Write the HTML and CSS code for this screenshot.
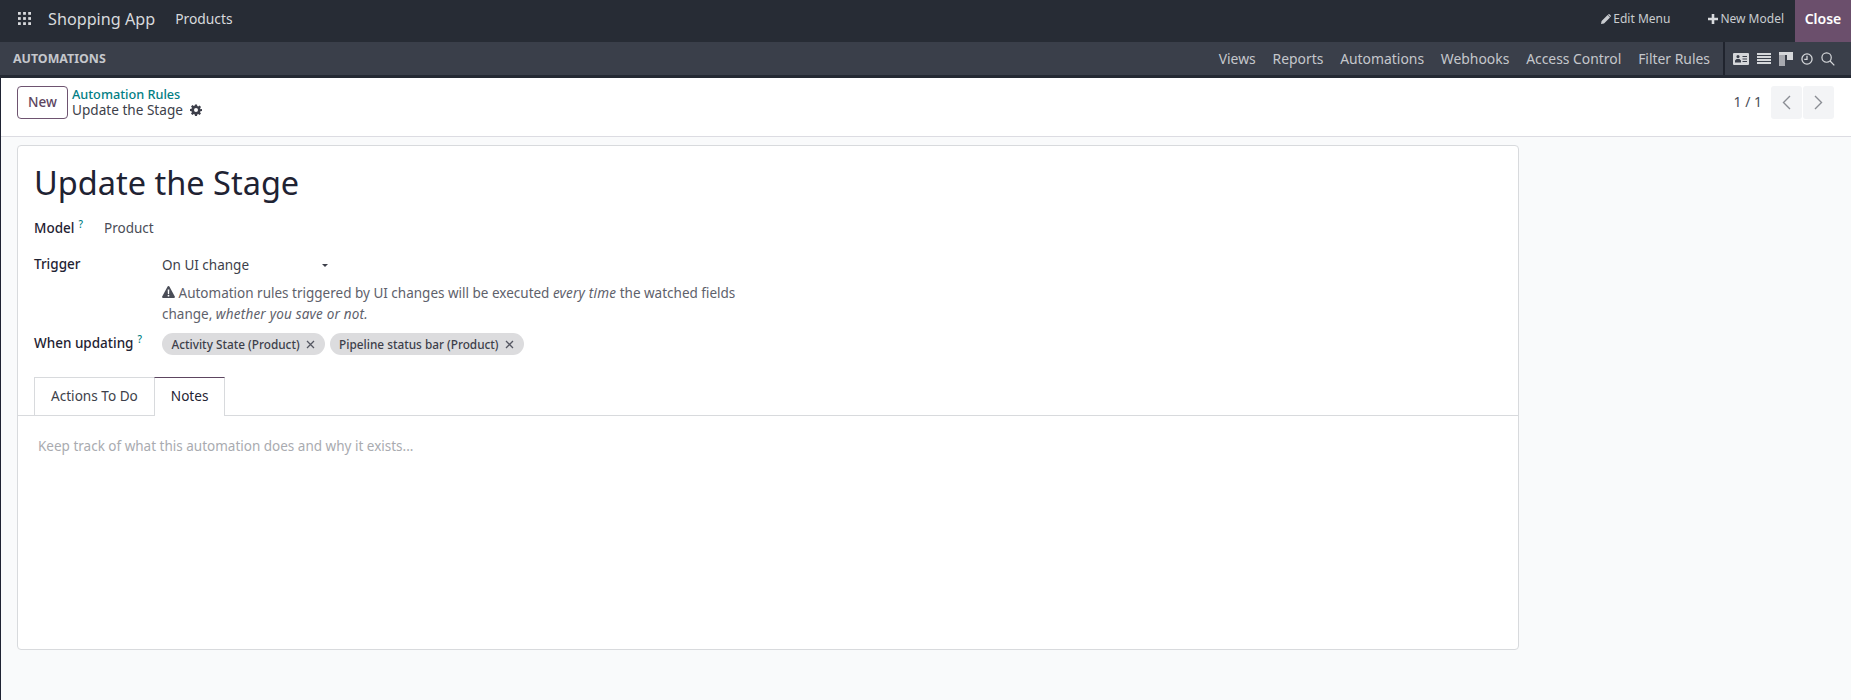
FILE: index.html
```html
<!DOCTYPE html>
<html lang="en">
<head>
<meta charset="utf-8">
<title>Update the Stage</title>
<link rel="stylesheet" href="styles.css">
</head>
<body>
<header class="navbar">
  <button class="apps" aria-label="Apps">
    <svg width="13" height="13" viewBox="0 0 14 14" fill="#d8dadd"><rect x="0" y="0" width="3" height="3"/><rect x="5.500" y="0" width="3" height="3"/><rect x="11" y="0" width="3" height="3"/><rect x="0" y="5.500" width="3" height="3"/><rect x="5.500" y="5.500" width="3" height="3"/><rect x="11" y="5.500" width="3" height="3"/><rect x="0" y="11" width="3" height="3"/><rect x="5.500" y="11" width="3" height="3"/><rect x="11" y="11" width="3" height="3"/></svg>
  </button>
  <span class="brand">Shopping App</span>
  <span class="menu-item">Products</span>
  <span class="spacer"></span>
  <span class="studio-link edit"><svg width="10" height="10" viewBox="0 0 10 10" fill="#c9ccd0"><path d="M0 10l.6-3L6.600 1l2.400 2.400-6 6zM7.300.4a1 1 0 0 1 1.400 0l1 1a1 1 0 0 1 0 1.300l-.4.4L6.900.8z"/></svg>Edit Menu</span>
  <span class="studio-link model"><svg width="10" height="10" viewBox="0 0 10 10" fill="#d8dadd"><path d="M3.700 0h2.600v3.700H10v2.600H6.300V10H3.700V6.300H0V3.700h3.700z"/></svg>New Model</span>
  <span class="close">Close</span>
</header>
<nav class="subbar">
  <span class="sub-title">AUTOMATIONS</span>
  <span class="spacer"></span>
  <span class="sub-item">Views</span>
  <span class="sub-item">Reports</span>
  <span class="sub-item">Automations</span>
  <span class="sub-item">Webhooks</span>
  <span class="sub-item">Access Control</span>
  <span class="sub-item">Filter Rules</span>
  <span class="view-icons">
    <svg width="16" height="12" viewBox="0 0 16 12" fill="#d5d7da"><path fill-rule="evenodd" d="M1 0h14a1 1 0 0 1 1 1v10a1 1 0 0 1-1 1H1a1 1 0 0 1-1-1V1a1 1 0 0 1 1-1zm4 2a1.600 1.600 0 1 0 0 3.200A1.600 1.600 0 0 0 5 2zM2 9.500h6V7.500L6.500 6h-3L2 7.500zM9.500 3v1H14V3zm0 2.500v1H14v-1zm0 2.500v1H14V8z"/></svg>
    <svg width="14" height="11" viewBox="0 0 14 11" fill="#d5d7da"><rect width="14" height="2"/><rect y="3" width="14" height="2"/><rect y="6" width="14" height="2"/><rect y="9" width="14" height="2"/></svg>
    <svg width="14" height="14" viewBox="0 0 14 14" fill="#d5d7da"><rect width="14" height="3"/><rect y="3" width="6" height="11" opacity=".7"/><rect x="8" y="3" width="6" height="5"/></svg>
    <svg width="12" height="12" viewBox="0 0 13 13" fill="none" stroke="#d5d7da" stroke-width="1.400"><circle cx="6.500" cy="6.500" r="5.500"/><path d="M6.500 3v4H3.500"/></svg>
    <svg width="14" height="14" viewBox="0 0 15 15" fill="none" stroke="#d5d7da" stroke-width="1.300"><circle cx="6" cy="6" r="5"/><path d="M9.700 9.700L14.300 14.300"/></svg>
  </span>
</nav>
<div class="page">
  <section class="control">
    <button class="btn-new">New</button>
    <div class="crumbs">
      <a class="crumb-link">Automation Rules</a>
      <span class="crumb-current">Update the Stage
        <svg class="gear" width="12" height="12" viewBox="0 0 24 24" fill="#3d3f4a"><path fill-rule="evenodd" d="M10 1h4l.6 3.100 1.900.8 2.700-1.800 2.800 2.800-1.800 2.700.8 1.900L24 10v4l-3.100.6-.8 1.900 1.800 2.700-2.800 2.800-2.700-1.800-1.900.8L14 23.900h-4l-.6-3.100-1.900-.8-2.700 1.800L2 19l1.800-2.700-.8-1.900L0 14v-4l3.100-.6.800-1.900L2.100 4.900l2.800-2.800 2.700 1.800 1.900-.8zM12 8a4 4 0 1 0 0 8 4 4 0 0 0 0-8z"/></svg>
      </span>
    </div>
    <span class="spacer"></span>
    <span class="pager">1 / 1</span>
    <span class="pager-btns">
      <button class="pager-btn" aria-label="Previous"><svg width="9" height="15" viewBox="0 0 9 15" fill="none" stroke="#8a8d94" stroke-width="1.400"><path d="M8 1L1.500 7.500 8 14"/></svg></button>
      <button class="pager-btn" aria-label="Next"><svg width="9" height="15" viewBox="0 0 9 15" fill="none" stroke="#8a8d94" stroke-width="1.400"><path d="M1 1l6.500 6.500L1 14"/></svg></button>
    </span>
  </section>
  <main class="sheet-wrap">
    <article class="sheet">
      <h1 class="title">Update the Stage</h1>
      <div class="row row-model">
        <span class="label label-model">Model<sup class="help">?</sup></span>
        <span class="value">Product</span>
      </div>
      <div class="form-grid">
        <span class="label">Trigger</span>
        <div class="trigger-cell">
          <div class="select"><span>On UI change</span><i class="caret"></i></div>
          <p class="warn"><svg width="13" height="12" viewBox="0 0 13 12" fill="#4a4d57"><path fill-rule="evenodd" d="M6.500 0a1 1 0 0 1 .9.500l5.400 10a1 1 0 0 1-.9 1.500H1.100a1 1 0 0 1-.9-1.500l5.400-10A1 1 0 0 1 6.500 0zM5.700 3.500l.2 4.500h1.200l.2-4.500zm.8 5.300a.9.900 0 1 0 0 1.800.9.900 0 0 0 0-1.800z"/></svg> Automation rules triggered by UI changes will be executed <em>every time</em> the watched fields change, <em>whether you save or not.</em></p>
        </div>
        <span class="label label-updating">When updating<sup class="help">?</sup></span>
        <div class="tags">
          <span class="tag">Activity State (Product)<svg width="9" height="9" viewBox="0 0 9 9" stroke="#555762" stroke-width="1.300"><path d="M1 1l7 7M8 1L1 8"/></svg></span>
          <span class="tag">Pipeline status bar (Product)<svg width="9" height="9" viewBox="0 0 9 9" stroke="#555762" stroke-width="1.300"><path d="M1 1l7 7M8 1L1 8"/></svg></span>
        </div>
      </div>
      <div class="tabs">
        <span class="tab">Actions To Do</span>
        <span class="tab tab-active">Notes</span>
      </div>
      <p class="notes">Keep track of what this automation does and why it exists...</p>
    </article>
  </main>
</div>
</body>
</html>
```
FILE: styles.css
```css
* { box-sizing: border-box; }
html, body { margin: 0; height: 100%; overflow: hidden; }
body {
  font-family: "Noto Sans", "Open Sans", sans-serif;
  font-size: 13.500px;
  color: #374151;
  background: #f9fafb;
  display: flex;
  flex-direction: column;
}
button { font: inherit; }
.spacer { flex: 1; }

.navbar {
  height: 42px;
  background: #272c35;
  display: flex;
  align-items: center;
  color: #d8dadd;
}
.apps {
  background: none;
  border: 0;
  padding: 0;
  margin: 0 0 5px 18px;
  width: 13px;
  height: 13px;
  display: flex;
}
.brand { margin: 0 0 5px 17px; font-size: 16.200px; }
.menu-item { margin: 0 0 5px 20px; font-size: 13.800px; }
.studio-link { display: flex; align-items: center; gap: 2px; font-size: 12px; color: #c9ccd0; margin-bottom: 5px; }
.edit { margin-right: 38px; }
.model { margin-right: 11px; }
.close {
  width: 56px;
  height: 42px;
  padding-bottom: 5px;
  background: #6b4f6c;
  color: #fff;
  font-weight: 600;
  font-size: 14px;
  display: flex;
  align-items: center;
  justify-content: center;
}

.subbar {
  height: 36px;
  background: #3a3f4a;
  border-bottom: 3px solid #242933;
  display: flex;
  align-items: center;
  color: #d2d4d8;
}
.sub-title { margin-left: 13px; font-size: 12.400px; font-weight: 700; color: #c5c7cc; }
.sub-item { margin: 0 0 1px 16.800px; font-size: 13.900px; color: #c5c7cc; }
.sub-title + .spacer + .sub-item { margin-left: 0; }
.view-icons {
  margin-left: 13px;
  height: 33px;
  border-left: 2px solid #20242e;
  padding: 0 16px 0 8px;
  display: flex;
  align-items: center;
  gap: 8px;
}

.page {
  flex: 1;
  border-left: 1px solid #1f2333;
  display: flex;
  flex-direction: column;
  min-height: 0;
}
.control {
  height: 59px;
  background: #fff;
  border-bottom: 1px solid #dcdce2;
  padding: 8px 17px 0 16px;
  display: flex;
  align-items: flex-start;
}
.btn-new {
  width: 51px;
  height: 33px;
  background: #fff;
  border: 1px solid #6e5470;
  border-radius: 4px;
  color: #5d4560;
  font-weight: 500;
  font-size: 13.500px;
  padding: 0 0 2px;
}
.crumbs { margin-left: 4px; display: flex; flex-direction: column; line-height: 16px; }
.crumb-link { color: #017e84; font-weight: 500; font-size: 12.700px; }
.crumb-current { color: #3d3f4a; font-size: 13.600px; display: flex; align-items: center; gap: 7px; }
.pager { margin-top: 6px; font-size: 14px; color: #4a4d57; }
.pager-btns { margin-left: 9px; display: flex; gap: 1px; }
.pager-btn {
  width: 31px;
  height: 33px;
  background: #f3f4f6;
  border: 0;
  border-radius: 3px;
  padding: 0;
  display: flex;
  align-items: center;
  justify-content: center;
}

.sheet-wrap { padding: 8px 0 0 16px; }
.sheet {
  width: 1502px;
  height: 505px;
  background: #fff;
  border: 1px solid #d8dadd;
  border-radius: 4px;
  padding-top: 15px;
}
.title {
  margin: 0 0 0 16px;
  font-size: 32.500px;
  font-weight: 400;
  line-height: 44px;
  color: #1f2333;
}
.label { font-weight: 500; color: #1f2333; font-size: 13.500px; }
.label-model { width: 70px; }
.label-updating { padding-top: 1px; }
.help { color: #017e84; font-size: 10px; margin-left: 4px; font-weight: 500; line-height: 0; }
.row-model { margin: 13px 0 0 16px; display: flex; align-items: baseline; line-height: 20px; }
.value { color: #4a4d57; }
.form-grid {
  margin: 16px 0 0 16px;
  display: grid;
  grid-template-columns: 128px 580px;
  row-gap: 7px;
  line-height: 20px;
}
.select { width: 166px; display: flex; align-items: center; justify-content: space-between; height: 22px; color: #3d3f4a; }
.caret { width: 0; height: 0; border: 3.500px solid transparent; border-top-color: #3d3f4a; border-bottom: 0; }
.warn { margin: 7px 0 0; color: #5e616b; line-height: 21px; }
.warn em { font-style: italic; letter-spacing: .2px; }
.tags { display: flex; gap: 5px; padding-top: 1px; }
.tag {
  height: 22px;
  padding: 0 10px 0 9.500px;
  background: #dcdcde;
  border-radius: 11px;
  display: flex;
  align-items: center;
  gap: 6px;
  font-size: 11.800px;
  font-weight: 500;
  color: #3d3f4a;
}
.tabs {
  margin-top: 22px;
  padding-left: 16px;
  height: 39px;
  display: flex;
  border-bottom: 1px solid #d8dadd;
}
.tab {
  height: 39px;
  padding: 0 16px 3px;
  border: 1px solid #d8dadd;
  border-bottom: 0;
  display: flex;
  align-items: center;
  font-size: 13.600px;
  color: #3d3f4a;
}
.tab-active {
  margin-left: -1px;
  background: #fff;
  border-top-color: #5d4560;
  color: #1f2333;
}
.notes { margin: 20px 0 0 20px; color: #a9abb0; line-height: 20px; }
```
